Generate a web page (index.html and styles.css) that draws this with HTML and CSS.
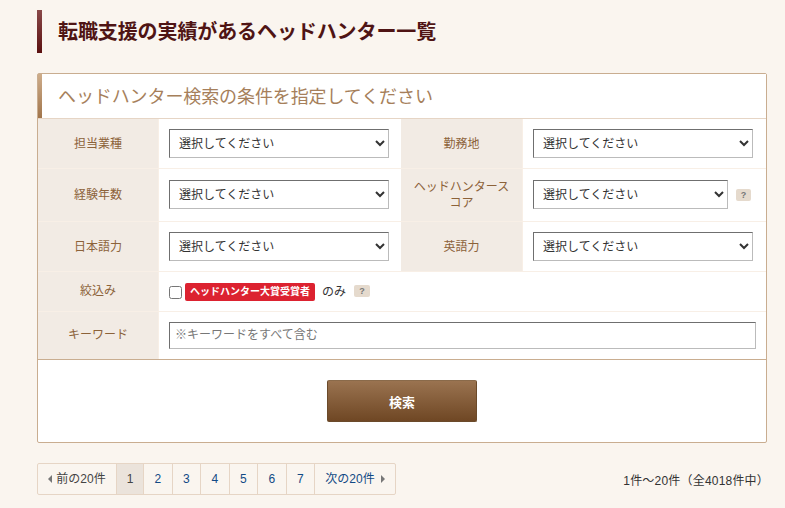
FILE: index.html
```html
<!DOCTYPE html>
<html lang="ja">
<head>
<meta charset="utf-8">
<title>転職支援の実績があるヘッドハンター一覧</title>
<link rel="stylesheet" href="styles.css">
</head>
<body>
<div class="page">
  <h1 class="page-title">転職支援の実績があるヘッドハンター一覧</h1>
  <form class="panel">
    <h2 class="panel-title">ヘッドハンター検索の条件を指定してください</h2>
    <div class="form-grid">
      <div class="row row-a">
        <div class="label">担当業種</div>
        <div class="field"><select class="sel"><option>選択してください</option></select></div>
        <div class="label">勤務地</div>
        <div class="field"><select class="sel"><option>選択してください</option></select></div>
      </div>
      <div class="row row-b">
        <div class="label label-tight">経験年数</div>
        <div class="field field-b"><select class="sel"><option>選択してください</option></select></div>
        <div class="label label-tight">ヘッドハンタースコア</div>
        <div class="field field-b"><select class="sel sel-short"><option>選択してください</option></select><span class="help help-score">?</span></div>
      </div>
      <div class="row row-c">
        <div class="label">日本語力</div>
        <div class="field"><select class="sel"><option>選択してください</option></select></div>
        <div class="label">英語力</div>
        <div class="field"><select class="sel"><option>選択してください</option></select></div>
      </div>
      <div class="row-wide row-d">
        <div class="label label-top">絞込み</div>
        <div class="field field-check">
          <input class="check" type="checkbox">
          <span class="award">ヘッドハンター大賞受賞者</span>
          <span class="only">のみ</span>
          <span class="help help-only">?</span>
        </div>
      </div>
      <div class="row-wide row-e">
        <div class="label label-top">キーワード</div>
        <div class="field field-key"><input class="keyword" type="text" placeholder="※キーワードをすべて含む"></div>
      </div>
    </div>
    <div class="actions"><button class="search" type="button">検索</button></div>
  </form>
  <div class="pager-row">
    <nav class="pager">
      <span class="cell cell-prev"><i class="tri tri-left"></i>前の20件</span>
      <span class="cell cell-current">1</span>
      <a class="cell cell-num">2</a>
      <a class="cell cell-num">3</a>
      <a class="cell cell-num">4</a>
      <a class="cell cell-num">5</a>
      <a class="cell cell-num">6</a>
      <a class="cell cell-num">7</a>
      <a class="cell cell-next">次の20件<i class="tri tri-right"></i></a>
    </nav>
    <div class="count">1件～20件（全4018件中）</div>
  </div>
</div>
</body>
</html>
```
FILE: styles.css
```css
* { box-sizing: border-box; }
html, body { margin: 0; padding: 0; }
body {
  background: #faf5ef;
  font-family: "Liberation Sans", "Noto Sans CJK JP", sans-serif;
  color: #333;
  height: 508px;
  overflow: hidden;
}
.page { width: 730px; margin-left: 37px; padding-top: 10px; }
.page-title {
  margin: 0;
  height: 43px;
  padding-left: 16px;
  border-left: 5px solid #5f1414;
  border-image: linear-gradient(#8a4a4a, #5a0f0f) 1;
  font-size: 20px;
  line-height: 44px;
  font-weight: 700;
  letter-spacing: -0.1px;
  color: #4f1414;
}
.panel {
  display: block;
  margin-top: 20px;
  height: 370px;
  background: #fff;
  border: 1px solid #c9ad90;
  border-radius: 2px;
}
.panel-title {
  margin: 0;
  height: 44px;
  padding-left: 16px;
  border-left: 4px solid #a67c52;
  border-image: linear-gradient(#cfae8c, #a0744a) 1;
  font-size: 18px;
  line-height: 46px;
  font-weight: 400;
  letter-spacing: -0.1px;
  color: #a67f5b;
  background: #fff;
}
.form-grid { border-top: 1px solid #e6d5c5; border-bottom: 1px solid #c9ad90; }
.row { display: grid; grid-template-columns: 121px 242px 122px 243px; border-bottom: 1px solid #f8efe6; }
.row-wide { display: grid; grid-template-columns: 121px 607px; border-bottom: 1px solid #f8efe6; }
.row-e { border-bottom: 0; }
.row-a { height: 50px; }
.row-b { height: 53px; }
.row-c { height: 50px; }
.row-d { height: 40px; }
.row-e { height: 47px; }
.label {
  display: flex;
  align-items: center;
  justify-content: center;
  text-align: center;
  background: #f2ebe4;
  border-right: 1px solid #f8efe6;
  color: #8c6239;
  font-size: 12px;
  line-height: 16px;
}
.label-tight { padding: 0 12px 1px; }
.label-top { padding-bottom: 2px; }
.field { display: flex; align-items: center; padding-left: 10px; }
.field-b { padding-bottom: 1px; }
.sel {
  width: 220px;
  height: 29px;
  font-family: inherit;
  font-size: 12px;
  color: #333;
  background: #fff;
  border: 1px solid;
  border-color: #6f6f6f #bbb #bbb #6f6f6f;
  border-radius: 0;
  padding: 0 5px;
}
.sel-short { width: 195px; }
.help {
  display: inline-block;
  width: 16px;
  height: 12px;
  background: #e5dacd;
  border-radius: 2px;
  color: #777;
  font-size: 9px;
  line-height: 12px;
  font-weight: 700;
  text-align: center;
}
.help-score { margin-left: 8px; width: 15px; }
.help-only { margin-bottom: 2px; }
.field-check { padding-top: 1px; }
.check { width: 13px; height: 13px; margin: 0 3px 0 0; }
.award {
  display: inline-block;
  width: 130px;
  height: 18px;
  background: #dc2230;
  border-radius: 2px;
  color: #fff;
  font-size: 10px;
  line-height: 18px;
  font-weight: 700;
  text-align: center;
}
.only { margin: 0 8px 4px 7px; font-size: 12px; color: #333; }
.field-key { align-items: flex-start; padding-top: 10px; }
.keyword {
  width: 587px;
  height: 27px;
  border: 1px solid;
  border-color: #6f6f6f #bbb #bbb #6f6f6f;
  padding: 0 5px;
  font-family: "Liberation Mono", "Liberation Sans", "Noto Sans CJK JP", sans-serif;
  font-size: 12px;
  background: #fff;
}
.keyword::placeholder { color: #777; opacity: 1; }
.actions { display: flex; justify-content: center; padding-top: 20px; }
.search {
  width: 150px;
  height: 42px;
  border: 1px solid #6b4a2a;
  border-top-color: #8a6a4a;
  border-radius: 2px;
  background: linear-gradient(#9a7350, #6f4724);
  color: #fff;
  font-family: inherit;
  font-size: 13px;
  font-weight: 700;
}
.pager-row { display: flex; justify-content: space-between; align-items: center; margin-top: 20px; height: 32px; }
.pager {
  display: flex;
  height: 32px;
  border: 1px solid #e6d5c5;
  border-radius: 2px;
  font-size: 12px;
}
.cell {
  display: flex;
  align-items: center;
  justify-content: center;
  border-right: 1px solid #e6d5c5;
  color: #124a85;
  line-height: 1;
}
.cell-prev { width: 79px; color: #444; }
.cell-current { width: 27px; background: #ebe3db; color: #444; }
.cell-num { width: 28.5px; }
.cell-next { width: 80px; border-right: 0; }
.tri { display: inline-block; width: 0; height: 0; border-top: 4px solid transparent; border-bottom: 4px solid transparent; }
.tri-left { border-right: 4px solid #777; margin-right: 4px; }
.tri-right { border-left: 4px solid #777; margin-left: 6px; }
.count { font-size: 12px; letter-spacing: 0.2px; color: #333; margin-right: -2px; }
```
